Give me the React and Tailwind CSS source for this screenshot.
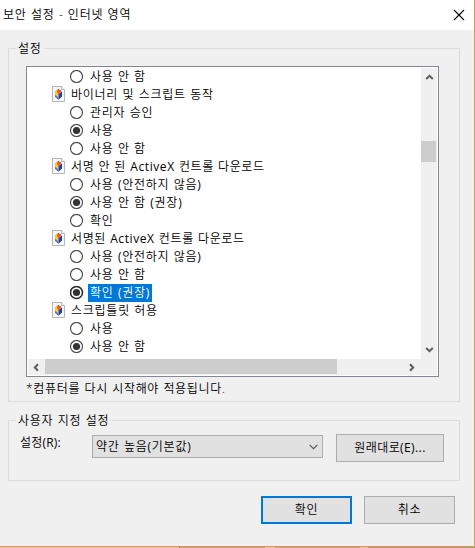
const rows = [
  { type: 'option', label: '사용 안 함' },
  { type: 'heading', label: '바이너리 및 스크립트 동작' },
  { type: 'option', label: '관리자 승인' },
  { type: 'option', label: '사용', checked: true },
  { type: 'option', label: '사용 안 함' },
  { type: 'heading', label: '서명 안 된 ActiveX 컨트롤 다운로드', mixed: true },
  { type: 'option', label: '사용 (안전하지 않음)' },
  { type: 'option', label: '사용 안 함 (권장)', checked: true },
  { type: 'option', label: '확인' },
  { type: 'heading', label: '서명된 ActiveX 컨트롤 다운로드', mixed: true },
  { type: 'option', label: '사용 (안전하지 않음)' },
  { type: 'option', label: '사용 안 함' },
  { type: 'option', label: '확인 (권장)', checked: true, selected: true },
  { type: 'heading', label: '스크립틀릿 허용' },
  { type: 'option', label: '사용' },
  { type: 'option', label: '사용 안 함', checked: true },
];

// Latin letters and brackets are set one step heavier than the Hangul around them.
function Label({ text }) {
  return text.split(/([A-Za-z().:]+)/).map((part, i) =>
    i % 2 === 1 ? (
      <span key={i} className="font-normal">
        {part}
      </span>
    ) : (
      part
    ),
  );
}

function Radio({ checked, bold }) {
  return (
    <svg width="14" height="14" viewBox="0 0 14 14" className="shrink-0">
      <circle cx="6.5" cy="6.5" r="6" fill="#fff" stroke={bold ? '#222' : '#444'} strokeWidth={bold ? 1.5 : 1.1} />
      {checked && <circle cx="6.5" cy="6.5" r="3.6" fill="#333" />}
    </svg>
  );
}

function PageIcon() {
  return (
    <svg width="13" height="16" viewBox="0 0 13 16" className="mb-0.5 shrink-0">
      <path d="M.5.5h9l3 3v12H.5z" fill="#f7f7f7" stroke="#b5b5b5" />
      <path d="M9.5.5v3h3" fill="#fff" stroke="#b5b5b5" />
      <path d="M6.5 2.8 3 5.2v5.3l3.5 3z" fill="#f8c43a" />
      <path d="M6.5 2.8 9.5 5 6.5 8 4.8 5z" fill="#e4562c" />
      <path d="M6.5 8 10 5.2v5.3l-3.5 3.2z" fill="#2343a8" />
      <path d="M3 8.8 6.5 12v1.7l-3.5-3z" fill="#4c67bd" />
    </svg>
  );
}

function Arrow({ dir }) {
  const paths = {
    up: 'M1.2 6 4.5 2.8 7.8 6',
    down: 'M1.2 3 4.5 6.2 7.8 3',
    left: 'M6 1.2 2.8 4.5 6 7.8',
    right: 'M3 1.2 6.2 4.5 3 7.8',
  };
  return (
    <svg width="9" height="9" viewBox="0 0 9 9">
      <path d={paths[dir]} fill="none" stroke="#5c5c5c" strokeWidth="2" />
    </svg>
  );
}

function Row({ row }) {
  if (row.type === 'heading') {
    return (
      <div className="flex h-[18px] items-center pl-[25px]">
        <PageIcon />
        <span className={row.mixed ? 'ml-1.5 leading-[18px] tracking-[0.6px]' : 'ml-1.5 leading-[18px]'}>
          <Label text={row.label} />
        </span>
      </div>
    );
  }
  return (
    <div className="flex h-[18px] items-center pl-[43px]">
      <Radio checked={row.checked} bold={row.selected} />
      <span className={row.selected ? 'ml-1 bg-[#0078d7] px-0.5 leading-[18px] text-white' : 'ml-1 pl-0.5 leading-[18px]'}>
        <Label text={row.label} />
      </span>
    </div>
  );
}

function Group({ title, className, children }) {
  return (
    <fieldset className={`relative ml-2 w-[452px] border border-[#dcdcdc] ${className}`}>
      <span className="absolute -top-[9px] left-[7px] bg-[#f0f0f0] px-0.5 leading-[18px]">{title}</span>
      {children}
    </fieldset>
  );
}

export default function App() {
  return (
    <div className="flex h-[548px] w-[475px] flex-col overflow-hidden bg-[#f0f0f0] font-['Open_Sans','Noto_Sans_CJK_KR',sans-serif] text-[12px] font-[350] tracking-[0.75px] whitespace-nowrap text-black [word-spacing:0.5px]">
      <div className="flex h-[547px] flex-col border-r border-b border-[#c8996b]">
        <header className="flex h-[30px] shrink-0 items-center justify-between bg-white pr-[9px] pl-[3px]">
          <span className="leading-[18px]">보안 설정 - 인터넷 영역</span>
          <svg width="12" height="12" viewBox="0 0 12 12">
            <path d="m1 1 10 10M11 1 1 11" stroke="#000" strokeWidth="1.1" />
          </svg>
        </header>

        <Group title="설정" className="mt-[18px] h-[354px] shrink-0">
          <div className="mt-[17px] ml-[17px] flex h-[311px] w-[413px] flex-col border border-[#828790] bg-white pr-px pb-px">
            <div className="flex h-[292px]">
              <div className="flex-1 overflow-hidden pt-px">
                {rows.map((row, i) => (
                  <Row key={i} row={row} />
                ))}
              </div>
              <div className="mt-px flex w-4 flex-col items-center bg-[#f0f0f0]">
                <div className="flex h-[18px] items-center">
                  <Arrow dir="up" />
                </div>
                <div className="mt-[55px] h-[21px] w-[15px] self-start bg-[#cdcdcd]" />
                <div className="mt-auto flex h-5 items-center">
                  <Arrow dir="down" />
                </div>
              </div>
            </div>
            <div className="ml-px flex h-4 items-center bg-[#f0f0f0]">
              <div className="flex w-[17px] justify-center">
                <Arrow dir="left" />
              </div>
              <div className="h-[15px] w-[292px] self-start bg-[#cdcdcd]" />
              <div className="ml-auto flex w-[30px]">
                <Arrow dir="right" />
              </div>
            </div>
          </div>
          <p className="mt-[3px] ml-[17px] leading-[18px] tracking-[0.68px]">*컴퓨터를 다시 시작해야 적용됩니다.</p>
        </Group>

        <Group title="사용자 지정 설정" className="mt-[18px] flex h-[61px] shrink-0 items-start">
          <div className="flex items-start pt-[13px] pl-[11px]">
            <label className="w-[72px] leading-[18px] tracking-[0.2px]">
              <Label text="설정(R):" />
            </label>
            <div className="mt-px flex h-[23px] w-[231px] items-center justify-between border border-[#adadad] bg-[#e1e1e1] pr-1 pl-[3px]">
              <span>
                <Label text="약간 높음(기본값)" />
              </span>
              <svg width="9" height="6" viewBox="0 0 9 6">
                <path d="m.6.8 3.9 3.9L8.4.8" fill="none" stroke="#555" strokeWidth="1.1" />
              </svg>
            </div>
            <button className="ml-[13px] h-7 w-[108px] border border-[#adadad] bg-[#e1e1e1] tracking-[0.4px]">
              <Label text="원래대로(E)..." />
            </button>
          </div>
        </Group>

        <div className="mt-[15px] flex shrink-0 gap-3 pl-[261px]">
          <button className="h-7 w-[91px] border-2 border-[#0078d7] bg-[#e1e1e1]">확인</button>
          <button className="h-7 w-[91px] border border-[#adadad] bg-[#e1e1e1]">취소</button>
        </div>
      </div>
      <div className="flex h-px">
        <div className="w-[179px] bg-[#d5cdc5]" />
        <div className="w-px bg-[#77706a]" />
        <div className="w-[85px] bg-[#b3aaa2]" />
        <div className="w-2.5 bg-[#d5cdc5]" />
        <div className="w-[85px] bg-[#b3aaa2]" />
        <div className="w-2 bg-[#d5cdc5]" />
        <div className="flex-1 bg-[#a39a92]" />
      </div>
    </div>
  );
}
